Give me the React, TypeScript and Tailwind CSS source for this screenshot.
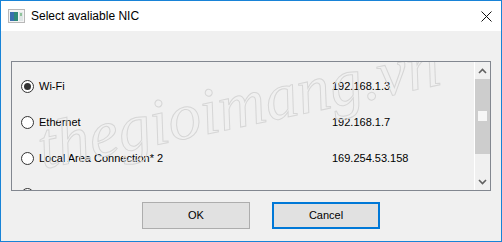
import { useState } from 'react'

const nics = [
  { name: 'Wi-Fi', ip: '192.168.1.3' },
  { name: 'Ethernet', ip: '192.168.1.7' },
  { name: 'Local Area Connection* 2', ip: '169.254.53.158' },
  { name: 'Local Area Connection* 3', ip: '169.254.12.40' },
]

function Radio({ checked }: { checked: boolean }) {
  return (
    <span className="flex h-[13px] w-[13px] shrink-0 items-center justify-center rounded-full border border-[#333] bg-white">
      {checked && <span className="h-[7px] w-[7px] rounded-full bg-[#333]" />}
    </span>
  )
}

export default function App() {
  const [selected, setSelected] = useState(0)

  return (
    <div
      className="flex h-[242px] w-[502px] flex-col border border-[#1883d7] bg-[#f0f0f0] text-[11px] text-black"
      style={{ fontFamily: '"Liberation Sans", Arial, sans-serif' }}
    >
      <div className="flex h-[30px] items-center bg-white pl-[7px] pr-[9px]">
        <svg width="17" height="14" viewBox="0 0 17 14" className="mr-[6px]">
          <rect x="0.5" y="0.5" width="16" height="13" fill="#f4f4f4" stroke="#b8b8b8" />
          <rect x="2" y="3" width="8" height="9" fill="#2f8a7a" />
          <rect x="2" y="3" width="4" height="9" fill="#3a6fb0" />
          <rect x="11" y="3" width="4" height="9" fill="#dfe6e6" />
          <rect x="12" y="4" width="2" height="3" fill="#8fc29a" />
        </svg>
        <span className="text-[12px]">Select avaliable NIC</span>
        <svg width="11" height="11" viewBox="0 0 11 11" className="ml-auto">
          <path d="M0.5 0.5 L10.5 10.5 M10.5 0.5 L0.5 10.5" stroke="#111" strokeWidth="1" />
        </svg>
      </div>

      <div className="px-[10px] pt-[30px]">
        <div className="relative flex h-[130px] overflow-hidden border border-[#828790] bg-[#f0f0f0]">
          <div className="flex-1 overflow-hidden pl-[9px] pt-[18px]">
            {nics.map((n, i) => (
              <div
                key={n.name}
                className="flex h-[36px] cursor-default items-start"
                onClick={() => setSelected(i)}
              >
                <div className="flex h-[13px] items-center gap-[5px]">
                  <Radio checked={selected === i} />
                  <span className="w-[288px] leading-none">{n.name}</span>
                  <span className="leading-none">{n.ip}</span>
                </div>
              </div>
            ))}
          </div>
          <div className="flex w-[16px] flex-col border-l border-white bg-[#f0f0f0]">
            <div className="flex h-[17px] items-center justify-center">
              <svg width="9" height="6" viewBox="0 0 9 6">
                <path d="M1 5 L4.5 1.5 L8 5" fill="none" stroke="#606060" strokeWidth="1.6" />
              </svg>
            </div>
            <div className="relative h-[75px] bg-[#cdcdcd]">
              <div className="absolute left-[3px] top-[32px] h-[10px] w-[9px] bg-[#f6f6f6]" />
            </div>
            <div className="flex-1" />
            <div className="flex h-[17px] items-center justify-center">
              <svg width="9" height="6" viewBox="0 0 9 6">
                <path d="M1 1 L4.5 4.5 L8 1" fill="none" stroke="#606060" strokeWidth="1.6" />
              </svg>
            </div>
          </div>
          <span
            aria-hidden="true"
            className="pointer-events-none absolute left-[22px] top-[10px] -rotate-[12deg] select-none text-[66px] italic leading-none text-transparent"
            style={{
              fontFamily: '"Liberation Serif", serif',
              WebkitTextStroke: '1px #d6d6d6',
            }}
          >
            thegioimang.vn
          </span>
        </div>
      </div>

      <div className="flex gap-[22px] pl-[141px] pt-[11px]">
        <button className="h-[27px] w-[108px] border border-[#adadad] bg-[#e1e1e1] text-[11px]">
          OK
        </button>
        <button className="h-[27px] w-[108px] border-2 border-[#0078d7] bg-[#e1e1e1] text-[11px]">
          Cancel
        </button>
      </div>
    </div>
  )
}
